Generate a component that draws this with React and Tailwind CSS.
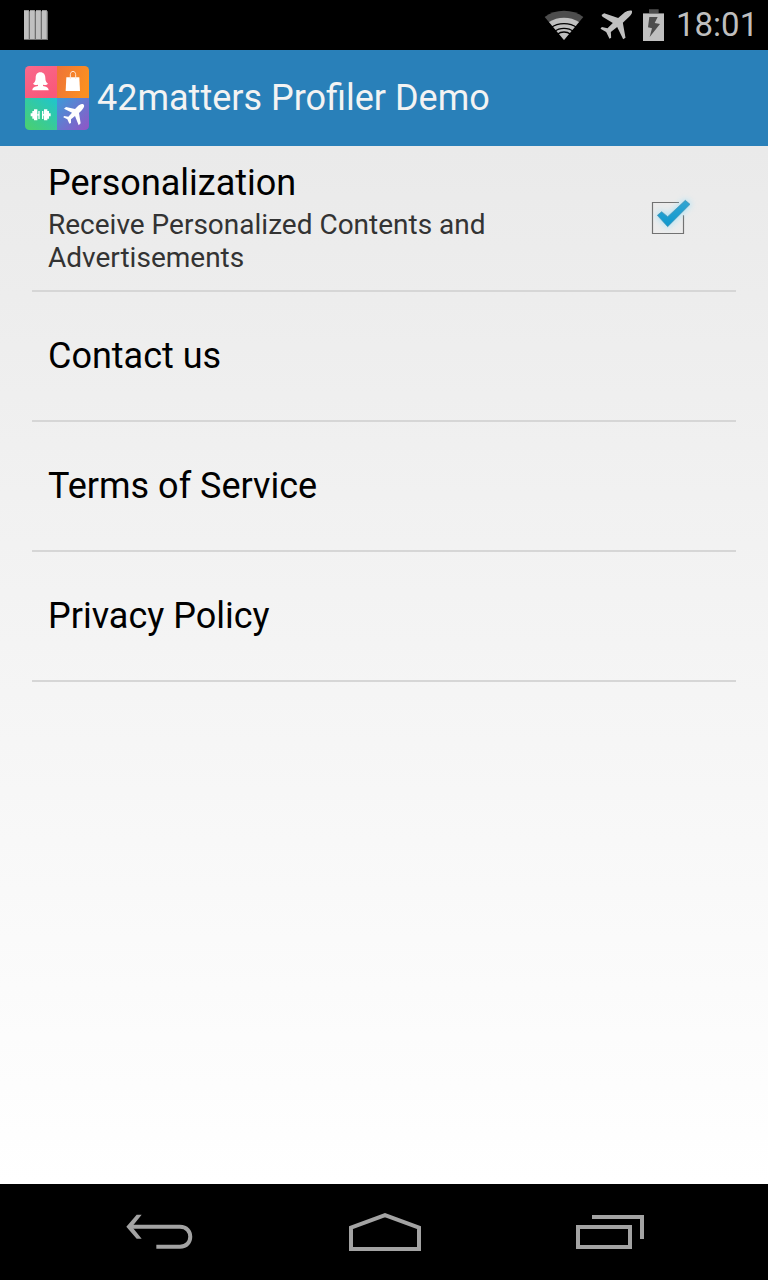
// src/App.jsx

// Status bar icons
function NotificationIcon() {
  return (
    <svg className="h-[30px] w-6" viewBox="0 0 24 30">
      {[0, 6, 12, 18].map((x) => (
        <g key={x}>
          <rect x={x} y="0" width="6" height="30" fill="#707070" />
          <rect x={x} y="0.5" width="4.7" height="28.5" fill="#c0c0c0" />
          <rect x={x + 5} y="0" width="1" height="1.2" fill="#000" />
        </g>
      ))}
    </svg>
  );
}

function WifiIcon() {
  return (
    <svg className="h-[30px] w-10" viewBox="41 27 120 90">
      <path d="M101 117 L43 48 Q67 29 101 29 Q135 29 159 48 Z" fill="#4d4d4d" />
      <path d="M101 117 L56 63 Q76 50 101 50 Q126 50 146 63 Z" fill="#c0c0c0" />
      <g fill="none" stroke="#000" strokeWidth="4">
        <path d="M61 76 Q78 63 101 63 Q124 63 141 76" transform="translate(0 5)" />
        <path d="M72 88 Q84 78 101 78 Q118 78 130 88" transform="translate(0 4)" />
        <path d="M81 99 Q90 92 101 92 Q112 92 121 99" transform="translate(0 1)" />
      </g>
    </svg>
  );
}

function AirplaneIcon({ className, fill }) {
  return (
    <svg className={className} viewBox="209 31 98 90" fill={fill}>
      <path d="M304 33 C298 31 288 34 283 38 L263 55 L221 41 L213 46 L216 51 L247 70 L231 86 L214 82 L210 87 L227 97 L237 117 L242 114 L241 97 L260 82 L278 119 L285 114 L277 69 L296 51 C302 45 307 38 304 33 Z" />
    </svg>
  );
}

function BatteryIcon() {
  return (
    <svg className="h-8 w-[21px]" viewBox="339 24 63 96">
      <path d="M357 25 h29 v11 h16 v12 h-63 v-12 h18 Z" fill="#4d4d4d" />
      <rect x="339" y="38" width="63" height="82" fill="#c0c0c0" />
      <path d="M358 48 H383 L374 66 L390 69 L359 108 L366 82 L354 79 Z" fill="#4d4d4d" />
    </svg>
  );
}

// Four coloured tiles of the launcher icon
function AppLogo() {
  return (
    <svg className="h-16 w-16" viewBox="30 30 192 192">
      <defs>
        <linearGradient id="pink" x1="0" y1="0" x2="0.6" y2="1">
          <stop offset="0" stopColor="#f8698c" />
          <stop offset="1" stopColor="#fa587a" />
        </linearGradient>
        <linearGradient id="orange" x1="0" y1="0" x2="1" y2="0.3">
          <stop offset="0" stopColor="#ee7338" />
          <stop offset="1" stopColor="#fb8f21" />
        </linearGradient>
        <linearGradient id="green" x1="1" y1="0" x2="0.2" y2="1">
          <stop offset="0" stopColor="#1fc5cf" />
          <stop offset="1" stopColor="#48cf75" />
        </linearGradient>
        <linearGradient id="purple" x1="0" y1="0" x2="1" y2="1">
          <stop offset="0" stopColor="#3c9bd8" />
          <stop offset="1" stopColor="#9254c6" />
        </linearGradient>
        <clipPath id="logo">
          <rect x="30" y="30" width="192" height="192" rx="13" />
        </clipPath>
      </defs>
      <g clipPath="url(#logo)">
        <rect x="30" y="30" width="96" height="96" fill="url(#pink)" />
        <rect x="126" y="30" width="96" height="96" fill="url(#orange)" />
        <rect x="30" y="126" width="96" height="96" fill="url(#green)" />
        <rect x="126" y="126" width="96" height="96" fill="url(#purple)" />
      </g>
      <g fill="#fff">
        <path d="M76 49 C66 49 62 56 62 66 C62 75 59 79 54 83 C58 88 64 87 69 86 L69 90 C60 92 52 94 52 103 H101 C101 94 92 92 84 90 L84 86 C89 87 95 88 99 83 C94 79 91 75 91 66 C91 56 86 49 76 49 Z" />
        <path d="M154 64 H193 L195 105 H152 Z" />
        <path d="M166 69 V56 C166 43 182 43 182 56 V69" fill="none" stroke="#ffe6d5" strokeWidth="3" />
        <path d="M47 172 h5 v-7 h5 v-5 h10 v33 h-10 v-5 h-5 v-7 h-5 Z M107 172 h-5 v-7 h-5 v-5 h-10 v33 h10 v-5 h5 v-7 h5 Z" />
        <rect x="67" y="174" width="5" height="5" />
        <rect x="82" y="174" width="5" height="5" />
        <rect x="70" y="165" width="4" height="24" />
        <rect x="81" y="165" width="4" height="24" />
        <path d="M205 145 C200 142 193 146 189 150 L180 159 L153 153 L147 158 L171 170 L160 182 L147 180 L145 184 L157 190 L163 203 L168 201 L168 190 L180 180 L191 208 L197 202 L192 171 L201 162 C207 155 210 149 205 145 Z" />
      </g>
    </svg>
  );
}

function CheckedBox() {
  return (
    <svg className="h-[70px] w-20 shrink-0" viewBox="0 9 240 210">
      <defs>
        <linearGradient id="tick" x1="0" y1="0" x2="0" y2="1">
          <stop offset="0" stopColor="#33a5d2" />
          <stop offset="1" stopColor="#0d98ce" />
        </linearGradient>
        <filter id="glow" x="-40%" y="-40%" width="180%" height="180%">
          <feGaussianBlur stdDeviation="9" />
        </filter>
      </defs>
      <path d="M147 67.5 H67.500 V160.500 H160.500 V106" fill="none" stroke="#727272" strokeWidth="3.500" />
      <path d="M82 106 L95 95 L113 110 L166 61 L180 73 L113 140 Z" fill="#7fdcff" stroke="#7fdcff" strokeWidth="6" opacity="0.6" filter="url(#glow)" />
      <path d="M82 106 L95 95 L113 110 L166 61 L180 73 L113 140 Z" fill="url(#tick)" stroke="#4590ae" strokeWidth="2" />
    </svg>
  );
}

// Navigation bar icons
function BackIcon() {
  return (
    <svg className="h-9 w-[68px]" viewBox="50 52 204 108" fill="none" stroke="#a3a3a3" strokeWidth="12">
      <path d="M60 90 H212 C253 90 253 150 212 150 H141" />
      <path d="M82 54 H97 L68 90 L97 126 H82 L51 90 Z" fill="#a3a3a3" stroke="none" />
    </svg>
  );
}

function HomeIcon() {
  return (
    <svg className="h-[38px] w-[72px]" viewBox="54 42 216 114" fill="none" stroke="#a3a3a3" strokeWidth="12">
      <path d="M60 150 V86 L162 48.500 L264 86 V150 Z" />
    </svg>
  );
}

function RecentsIcon() {
  return (
    <svg className="h-[34px] w-[68px]" viewBox="48 54 204 102" fill="none" stroke="#a3a3a3" strokeWidth="12">
      <rect x="54" y="90" width="156" height="60" />
      <path d="M96 60 H246 V126" />
    </svg>
  );
}

const links = ['Contact us', 'Terms of Service', 'Privacy Policy'];

export default function App() {
  return (
    <div className="flex h-[1280px] w-[768px] flex-col overflow-hidden bg-black font-['Roboto',sans-serif]">
      {/* Status Bar */}
      <div className="flex h-[50px] shrink-0 items-center justify-between pl-6 pr-[15px]">
        <NotificationIcon />
        <div className="flex items-center">
          <WifiIcon />
          <AirplaneIcon className="ml-4 h-[30px] w-[33px]" fill="#c0c0c0" />
          <div className="ml-2.5">
            <BatteryIcon />
          </div>
          <span className="ml-3 w-[77px] whitespace-nowrap text-right text-[33px] leading-[50px] text-[#bebebe]">18:01</span>
        </div>
      </div>

      {/* Action Bar */}
      <header className="flex h-24 shrink-0 items-center gap-2 bg-[#2980b9] pl-[25px]">
        <AppLogo />
        <h1 className="text-[36px] leading-[42px] text-[#f3f3f3]">42matters Profiler Demo</h1>
      </header>

      {/* Preferences */}
      <main className="flex-1 bg-linear-to-b from-[#eaeaea] to-white px-8">
        <div className="flex h-[146px] items-center justify-between border-b-2 border-[#d6d6d6] pl-4 pr-[26px]">
          <div className="w-[500px]">
            <h2 className="text-[36px] leading-[42px] text-black">Personalization</h2>
            <p className="mt-1 text-[28px] leading-[33px] text-[#333]">
              Receive Personalized Contents and Advertisements
            </p>
          </div>
          <CheckedBox />
        </div>
        {links.map((label) => (
          <div key={label} className="flex h-[130px] items-center border-b-2 border-[#d6d6d6] pl-4">
            <h2 className="text-[36px] leading-[42px] text-black">{label}</h2>
          </div>
        ))}
      </main>

      {/* Navigation Bar */}
      <nav className="flex h-24 shrink-0 items-center justify-between pl-[126px] pr-[124px]">
        <BackIcon />
        <HomeIcon />
        <RecentsIcon />
      </nav>
    </div>
  );
}
